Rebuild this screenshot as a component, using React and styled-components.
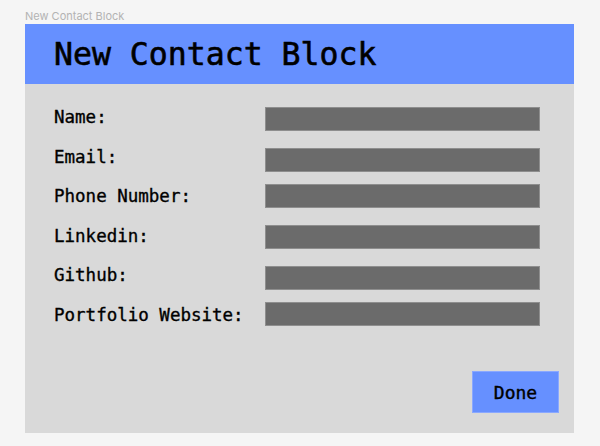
import React from 'react'
import styled, { createGlobalStyle } from 'styled-components'

const Global = createGlobalStyle`
  html, body { margin: 0; padding: 0; background: #f5f5f5; }
  body { width: 600px; height: 446px; overflow: hidden; }
`

const Page = styled.div`
  padding: 9px 26px 0 25px;
  font-family: "DejaVu Sans Mono", monospace;
`

const FrameLabel = styled.div`
  font-family: Inter, "Liberation Sans", sans-serif;
  font-size: 11px;
  line-height: 15px;
  color: #b3b3b3;
  height: 15px;
`

const Frame = styled.div`
  width: 549px;
  height: 409px;
  background: #d9d9d9;
  display: flex;
  flex-direction: column;
`

const Header = styled.div`
  height: 60px;
  background: #6690ff;
  display: flex;
  align-items: center;
  padding-left: 29px;
  font-size: 31.5px;
  color: #000;
  -webkit-text-stroke: 0.6px #000;
`

const Form = styled.div`
  display: flex;
  flex-direction: column;
  padding: 23px 34px 0 29px;
`

const Row = styled.div`
  display: flex;
  align-items: center;
  justify-content: space-between;
  height: 24px;
  margin-top: ${p => p.$gap}px;
`

const Label = styled.span`
  font-size: 17.5px;
  color: #000;
  -webkit-text-stroke: 0.35px #000;
  position: relative;
  top: ${p => p.$shift || 0}px;
`

const Field = styled.div`
  width: 273px;
  height: 22px;
  background: #6b6b6b;
  border: 1px solid #8e8e8e;
`

const Footer = styled.div`
  margin-top: auto;
  display: flex;
  justify-content: flex-end;
  padding: 0 15px 20px 0;
`

const Done = styled.button`
  width: 87px;
  height: 42px;
  background: #6690ff;
  border: 1px solid #8aa8ff;
  font-family: "DejaVu Sans Mono", monospace;
  font-size: 18px;
  color: #000;
  -webkit-text-stroke: 0.4px #000;
  padding: 0;
  cursor: pointer;
`

const rows = [
  { label: 'Name:', gap: 0, shift: -2 },
  { label: 'Email:', gap: 17, shift: -3 },
  { label: 'Phone Number:', gap: 12, shift: 0 },
  { label: 'Linkedin:', gap: 17, shift: -1 },
  { label: 'Github:', gap: 17, shift: -3 },
  { label: 'Portfolio Website:', gap: 12, shift: 1 },
]

export default function App() {
  return (
    <>
      <Global />
      <Page>
        <FrameLabel>New Contact Block</FrameLabel>
        <Frame>
          <Header>New Contact Block</Header>
          <Form>
            {rows.map(r => (
              <Row key={r.label} $gap={r.gap}>
                <Label $shift={r.shift}>{r.label}</Label>
                <Field />
              </Row>
            ))}
          </Form>
          <Footer>
            <Done>Done</Done>
          </Footer>
        </Frame>
      </Page>
    </>
  )
}
